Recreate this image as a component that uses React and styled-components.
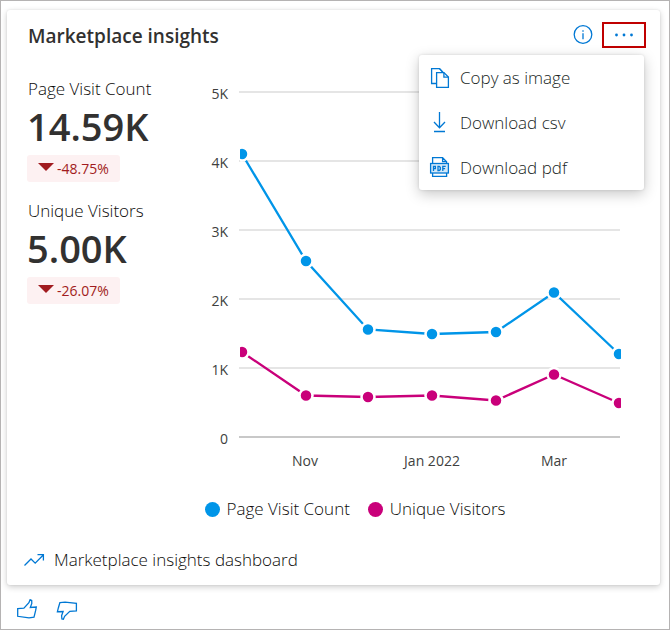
import React from "react";
import styled, { createGlobalStyle } from "styled-components";

const GlobalStyle = createGlobalStyle`
  *, *::before, *::after { box-sizing: border-box; }
  body {
    margin: 0;
    background: #fff;
    color: #0c0b0a;
    font-family: "Open Sans", "Noto Sans", sans-serif;
    font-size: 17px;
    font-weight: 300;
  }
  button { font: inherit; color: inherit; background: none; border: 0; padding: 0; cursor: pointer; }
`;

const Page = styled.div`
  min-height: 100vh;
  padding: 9px 9px 0 6px;
  border: 1px solid #b5b3b3;
  background: #fff;
`;

const Card = styled.section`
  border-radius: 3px;
  background: #fff;
  box-shadow: 0 2px 6px rgba(0, 0, 0, 0.2), 0 0 2px rgba(0, 0, 0, 0.1);
`;

const Header = styled.header`
  position: relative;
  display: flex;
  align-items: center;
  height: 50px;
  padding: 0 14px 0 21px;
`;

const Title = styled.h1`
  flex: 1;
  margin: 0;
  padding-top: 2px;
  font-size: 19px;
  line-height: 26px;
  font-weight: 600;
  color: #323130;
`;

const InfoButton = styled.button`
  display: flex;
  margin-right: 9px;
  color: #0078d4;
`;

const MoreButton = styled.button`
  display: flex;
  align-items: center;
  justify-content: center;
  width: 44px;
  height: 26px;
  && { border: 2px solid #c00000; }
  color: #0078d4;
`;

const Menu = styled.div`
  position: absolute;
  top: 45px;
  right: 16px;
  width: 225px;
  border-radius: 3px;
  background: #fff;
  box-shadow: 0 4px 14px rgba(0, 0, 0, 0.22), 0 0 3px rgba(0, 0, 0, 0.12);
`;

const MenuItem = styled.button`
  display: flex;
  align-items: center;
  gap: 9px;
  width: 100%;
  height: 45px;
  && { padding: 0 10px; color: #201f1e; }
  text-align: left;
  svg { color: #0078d4; }
`;

const Body = styled.div`
  display: flex;
  padding: 18px 20px 0;
`;

const Metrics = styled.div`
  flex: none;
  width: 173px;
`;

const Metric = styled.div`
  display: flex;
  flex-direction: column;
  align-items: flex-start;
  margin-bottom: 18px;
`;

const MetricLabel = styled.span`
  padding-left: 1px;
  line-height: 22px;
`;

const MetricValue = styled.strong`
  margin-bottom: 2px;
  font-size: 38px;
  line-height: 53px;
  font-weight: 600;
  color: #323130;
`;

const Change = styled.span`
  display: flex;
  align-items: center;
  gap: 3px;
  height: 27px;
  padding: 0 11px;
  border-radius: 3px;
  background: #fdf1f2;
  color: #a11c20;
  font-size: 14px;
  font-weight: 400;
  svg { margin-bottom: 4px; }
`;

const Chart = styled.svg`
  display: block;
  flex: 1;
  min-width: 0;
  text { font-size: 14px; font-weight: 400; fill: #403f3e; }
`;

const Legend = styled.ul`
  display: flex;
  justify-content: center;
  gap: 18px;
  margin: 0;
  padding: 24px 0 0 43px;
  list-style: none;
`;

const LegendItem = styled.li`
  display: flex;
  align-items: center;
  gap: 7px;
  line-height: 26px;
  &::before {
    content: "";
    width: 15px;
    height: 15px;
    border-radius: 50%;
    background: ${(p) => p.$color};
  }
`;

const DashboardLink = styled.a`
  display: flex;
  align-items: center;
  gap: 9px;
  padding: 25px 16px 12px;
  line-height: 26px;
  color: inherit;
  text-decoration: none;
  svg { color: #0078d4; }
`;

const Feedback = styled.footer`
  display: flex;
  gap: 18px;
  padding: 14px 9px 0;
  color: #0078d4;
  button { display: flex; color: inherit; }
`;

const Icon = styled.svg`
  display: block;
  flex: none;
  fill: none;
  stroke: currentColor;
  stroke-width: 1.3;
`;

const CopyIcon = () => (
  <Icon width="22" height="22" viewBox="0 0 22 22" aria-hidden="true">
    <path d="M7 16.500H2.600V1.600h7.900l3.500 3.500" />
    <path d="M7.600 5.600h7.300l4.500 4.500v10.300H7.600z" />
    <path d="M14.900 5.600v4.500h4.500" />
    <path d="M10.500 1.600l3.500 4" />
  </Icon>
);

const DownloadIcon = () => (
  <Icon width="22" height="22" viewBox="0 0 22 22" aria-hidden="true">
    <path d="M10.500 0v15.500M5 10l5.500 5.700L16 10M5 19.500h11" />
  </Icon>
);

const PdfIcon = () => (
  <Icon width="22" height="22" viewBox="0 0 22 22" aria-hidden="true">
    <path d="M3.600 6.500V.700h10l4 4v2M13.600.700v4h4" />
    <rect x="1.600" y="6.500" width="17.800" height="9.500" fill="#d4e9f8" />
    <path d="M3.600 16v3.400h14V16" />
    <path d="M4.500 14V9.400h1.900v2.300H4.500M9 9.400v4.100h1.200l1.100-.9v-2.300l-1.100-.9zM13.800 14V9.400h2.900M13.800 11.600h2.300" />
  </Icon>
);

const InfoIcon = () => (
  <Icon width="20" height="20" viewBox="0 0 20 20" aria-hidden="true">
    <circle cx="10" cy="9.500" r="8.800" />
    <path d="M10 8.300v6M10 5.300v1.500" />
  </Icon>
);

const MoreIcon = () => (
  <Icon width="20" height="6" viewBox="0 0 20 6" aria-hidden="true">
    {[2.5, 10, 17.5].map((x) => (
      <circle key={x} cx={x} cy="3" r="1.400" fill="currentColor" stroke="none" />
    ))}
  </Icon>
);

const TrendIcon = () => (
  <Icon width="22" height="16" viewBox="0 0 22 16" aria-hidden="true">
    <path d="M1.500 13.500L8 7l4.200 4.200L20 3.300M14.500 2.700h5.900v5.900" />
  </Icon>
);

const ThumbUpIcon = () => (
  <Icon width="22" height="22" viewBox="0 0 22 22" aria-hidden="true">
    <path d="M1.700 9.700l6.200-.5 5-5.500 1.200-3 1.600.8.100 3-1.500 4 6-.5-.7 3.700-1.600 6.500-5 .6-11.300-1.500z" />
  </Icon>
);

const ThumbDownIcon = () => (
  <Icon width="22" height="22" viewBox="0 0 22 22" aria-hidden="true">
    <path d="M3.900 3.600l5.200-.5 11.300 1.200v7.700l-6.600.3-5.200 5-1.200 3-1.500-.4-.3-3.200 1.500-4.200-5.700.2 1-4z" />
  </Icon>
);

const metrics = [
  { label: "Page Visit Count", value: "14.59K", change: "-48.75%" },
  { label: "Unique Visitors", value: "5.00K", change: "-26.07%" },
];

const ticks = ["5K", "4K", "3K", "2K", "1K", "0"];
const months = [
  { label: "Nov", x: 305 },
  { label: "Jan 2022", x: 432 },
  { label: "Mar", x: 554 },
];

const xs = [242, 306, 368, 432, 496, 554, 619];
const series = [
  { name: "Page Visit Count", color: "#0095e8", ys: [154, 261, 329.500, 334, 332, 292.500, 354] },
  { name: "Unique Visitors", color: "#c9007a", ys: [352, 395.500, 397, 395.500, 400.500, 374.500, 403] },
];

const TrendChart = () => (
  <Chart viewBox="200 78 440 394" role="img" aria-label="Page visits and unique visitors by month">
    <defs>
      <clipPath id="plot">
        <rect x="240" y="80" width="381" height="370" />
      </clipPath>
    </defs>
    {ticks.map((t, i) => (
      <g key={t}>
        <line x1="239" x2="620" y1={92 + i * 69} y2={92 + i * 69} stroke={t === "0" ? "#c8c8c8" : "#dcdcdc"} strokeWidth={t === "0" ? 2 : 1.5} />
        <text x="228" y={99 + i * 69} textAnchor="end">{t}</text>
      </g>
    ))}
    {months.map((m) => (
      <text key={m.label} x={m.x} y="466" textAnchor="middle">{m.label}</text>
    ))}
    <g clipPath="url(#plot)">
      {series.map((s) => (
        <g key={s.name}>
          <polyline fill="none" stroke={s.color} strokeWidth="2.300" points={s.ys.map((y, i) => `${xs[i]},${y}`).join(" ")} />
          {s.ys.map((y, i) => (
            <circle key={xs[i]} cx={xs[i]} cy={y} r="6.500" fill={s.color} stroke="#fff" strokeWidth="2.500" />
          ))}
        </g>
      ))}
    </g>
  </Chart>
);

export default function App() {
  return (
    <Page>
      <GlobalStyle />
      <Card>
        <Header>
          <Title>Marketplace insights</Title>
          <InfoButton aria-label="Information"><InfoIcon /></InfoButton>
          <MoreButton aria-label="More options"><MoreIcon /></MoreButton>
          <Menu>
            <MenuItem><CopyIcon />Copy as image</MenuItem>
            <MenuItem><DownloadIcon />Download csv</MenuItem>
            <MenuItem><PdfIcon />Download pdf</MenuItem>
          </Menu>
        </Header>
        <Body>
          <Metrics>
            {metrics.map((m) => (
              <Metric key={m.label}>
                <MetricLabel>{m.label}</MetricLabel>
                <MetricValue>{m.value}</MetricValue>
                <Change>
                  <svg width="16" height="8" viewBox="0 0 16 8" aria-hidden="true">
                    <path d="M0 0h16L8 8z" fill="#a11c20" />
                  </svg>
                  {m.change}
                </Change>
              </Metric>
            ))}
          </Metrics>
          <TrendChart />
        </Body>
        <Legend>
          {series.map((s) => (
            <LegendItem key={s.name} $color={s.color}>{s.name}</LegendItem>
          ))}
        </Legend>
        <DashboardLink href="#dashboard"><TrendIcon />Marketplace insights dashboard</DashboardLink>
      </Card>
      <Feedback>
        <button aria-label="Like"><ThumbUpIcon /></button>
        <button aria-label="Dislike"><ThumbDownIcon /></button>
      </Feedback>
    </Page>
  );
}
